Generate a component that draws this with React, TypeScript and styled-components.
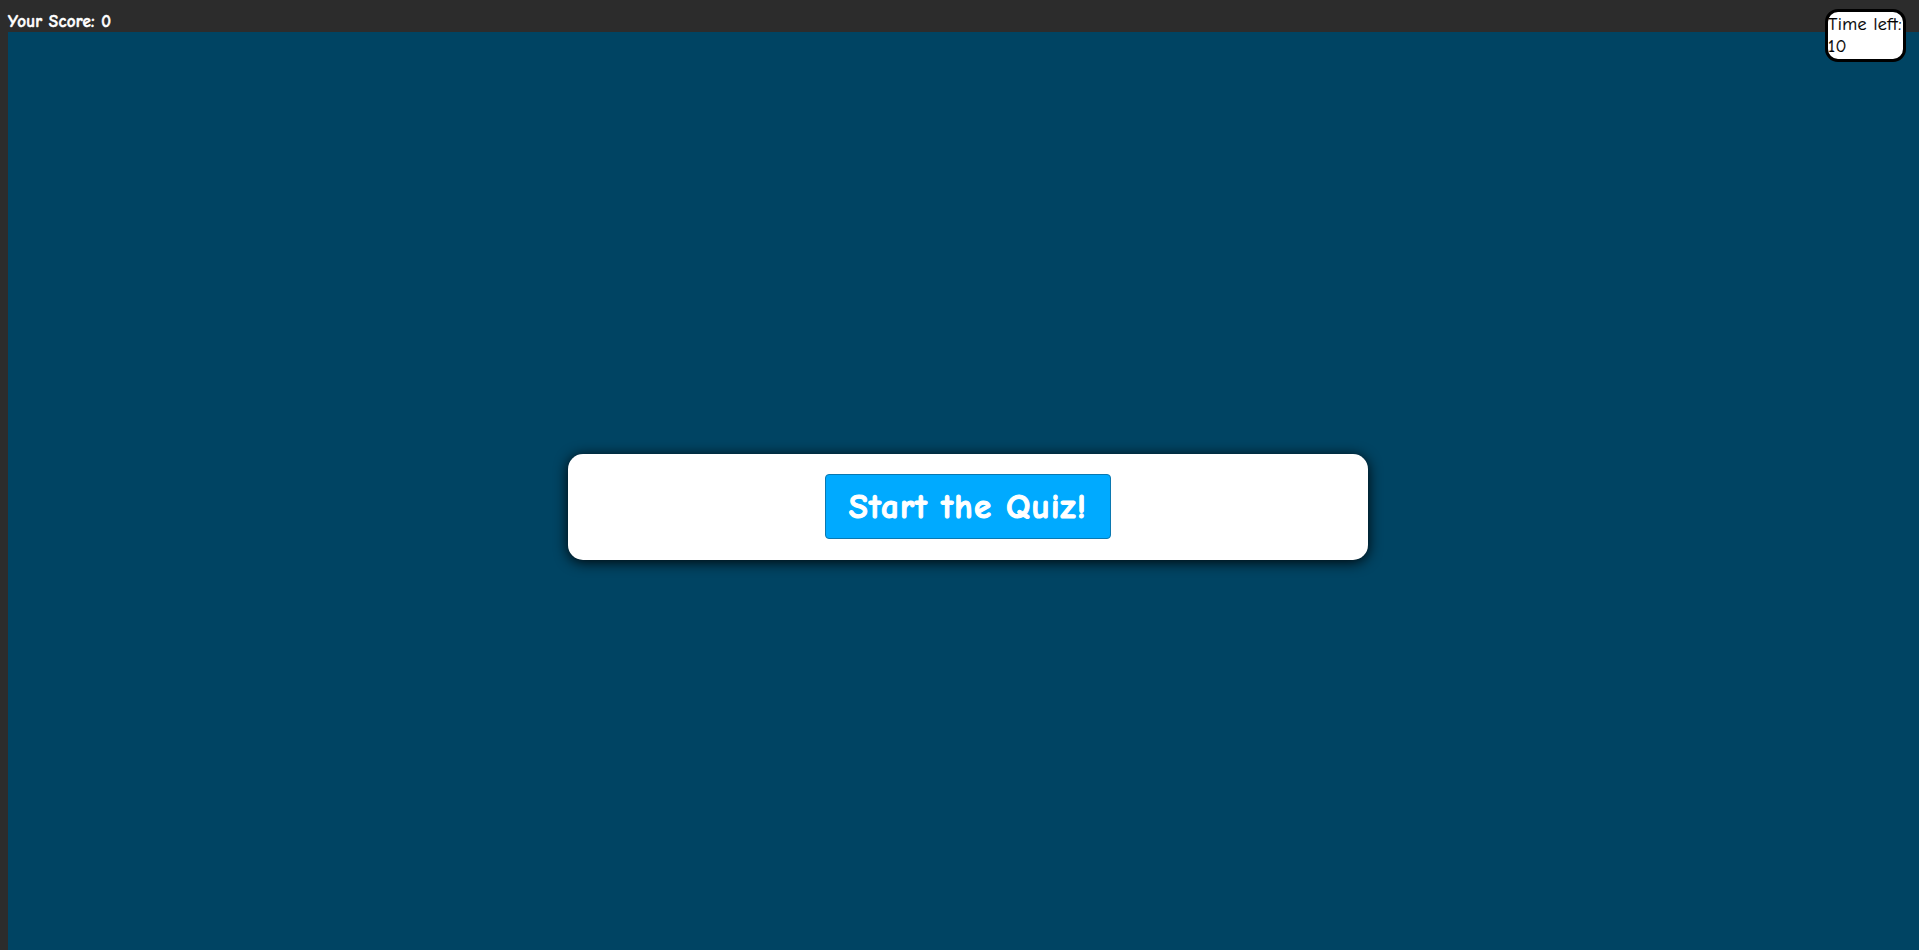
import React from "react";
import styled, { createGlobalStyle } from "styled-components";

const GlobalStyle = createGlobalStyle`
  html, body {
    margin: 0;
    padding: 0;
    overflow: hidden;
    background: #2c2c2c;
    font-family: "Comic Sans MS", "Comic Neue", "Open Sans", sans-serif;
  }
  body {
    padding: 8px 0 0 8px;
    height: 950px;
    box-sizing: border-box;
  }
`;

const Page = styled.div`
  position: relative;
  display: flex;
  flex-direction: column;
`;

const ScoreBar = styled.div`
  height: 24px;
  color: #ffffff;
  font-size: 17px;
  font-weight: 700;
  line-height: 27px;
  letter-spacing: 0.3px;
  -webkit-text-stroke: 0.5px #ffffff;
`;

const Stage = styled.main`
  width: 1920px;
  height: 950px;
  background: #004463;
  display: flex;
  align-items: center;
  justify-content: center;
`;

const Card = styled.div`
  width: 800px;
  height: 106px;
  box-sizing: border-box;
  background: #ffffff;
  border-radius: 15px;
  box-shadow: 0 2px 14px rgba(0, 0, 0, 0.95);
  display: flex;
  justify-content: center;
  padding-top: 20px;
`;

const StartButton = styled.button`
  width: 286px;
  height: 65px;
  box-sizing: border-box;
  background: #00aaff;
  border: 1px solid #0b78b0;
  border-radius: 4px;
  color: #ffffff;
  font-family: inherit;
  font-size: 35px;
  font-weight: 700;
  letter-spacing: 1.2px;
  -webkit-text-stroke: 1.1px #ffffff;
  cursor: pointer;
  padding: 0;
`;

const Timer = styled.div`
  position: absolute;
  top: 1px;
  right: 13px;
  width: 81px;
  height: 53px;
  box-sizing: border-box;
  background: #ffffff;
  border: 3px solid #000000;
  border-radius: 13px;
  color: #000000;
  font-size: 18px;
  line-height: 22px;
  letter-spacing: 0.4px;
  -webkit-text-stroke: 0.2px #000000;
  padding-top: 2px;
  white-space: nowrap;
`;

export default function App() {
  return (
    <>
      <GlobalStyle />
      <Page>
        <ScoreBar>Your Score: 0</ScoreBar>
        <Stage>
          <Card>
            <StartButton>Start the Quiz!</StartButton>
          </Card>
        </Stage>
        <Timer>
          Time left:
          <br />
          10
        </Timer>
      </Page>
    </>
  );
}
